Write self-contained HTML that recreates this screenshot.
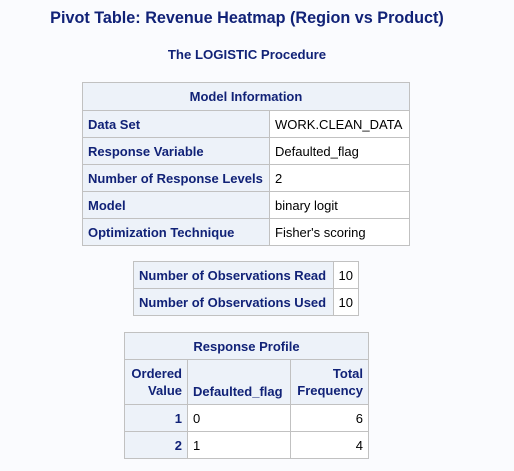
<!DOCTYPE html>
<html><head><style>
body{margin:0;background:#fafbfe;font-family:"Liberation Sans",Arial,sans-serif;width:514px;height:471px;position:relative;overflow:hidden;color:#000}
.t1{position:absolute;top:9px;left:0;width:494px;text-align:center;font-size:16.2px;font-weight:bold;color:#112277}
.t2{position:absolute;top:47px;left:0;width:494px;text-align:center;font-size:13.2px;font-weight:bold;color:#112277}
table{position:absolute;border-collapse:collapse;font-size:13px}
td,th{border:1px solid #c1c1c1;padding:0 5px;height:26px;box-sizing:border-box}
th{background:#edf2f9;color:#112277;font-weight:bold;text-align:left;white-space:nowrap}
td{background:#fff;white-space:nowrap}
th.c{text-align:center}
.r{text-align:right}
</style></head><body>
<div class="t1">Pivot Table: Revenue Heatmap (Region vs Product)</div>
<div class="t2">The LOGISTIC Procedure</div>
<table style="left:82px;top:82px;width:328px">
<tr><th class="c" colspan="2" style="height:28px">Model Information</th></tr>
<tr><th style="width:187px;height:27px">Data Set</th><td>WORK.CLEAN_DATA</td></tr>
<tr><th style="height:27px">Response Variable</th><td>Defaulted_flag</td></tr>
<tr><th style="height:27px">Number of Response Levels</th><td>2</td></tr>
<tr><th style="height:27px">Model</th><td>binary logit</td></tr>
<tr><th style="height:27px">Optimization Technique</th><td>Fisher's scoring</td></tr>
</table>
<table style="left:133px;top:261px;width:226px">
<tr><th style="width:200px;height:27px">Number of Observations Read</th><td>10</td></tr>
<tr><th style="height:27px">Number of Observations Used</th><td>10</td></tr>
</table>
<table style="left:124px;top:332px;width:245px">
<tr><th class="c" colspan="3" style="height:27px">Response Profile</th></tr>
<tr><th class="r" style="width:63px;height:45px;line-height:17px">Ordered<br>Value</th><th style="width:103px;vertical-align:bottom;padding-bottom:5px">Defaulted_flag</th><th class="r" style="line-height:17px">Total<br>Frequency</th></tr>
<tr><th class="r" style="height:27px">1</th><td>0</td><td class="r">6</td></tr>
<tr><th class="r" style="height:27px">2</th><td>1</td><td class="r">4</td></tr>
</table>
</body></html>
